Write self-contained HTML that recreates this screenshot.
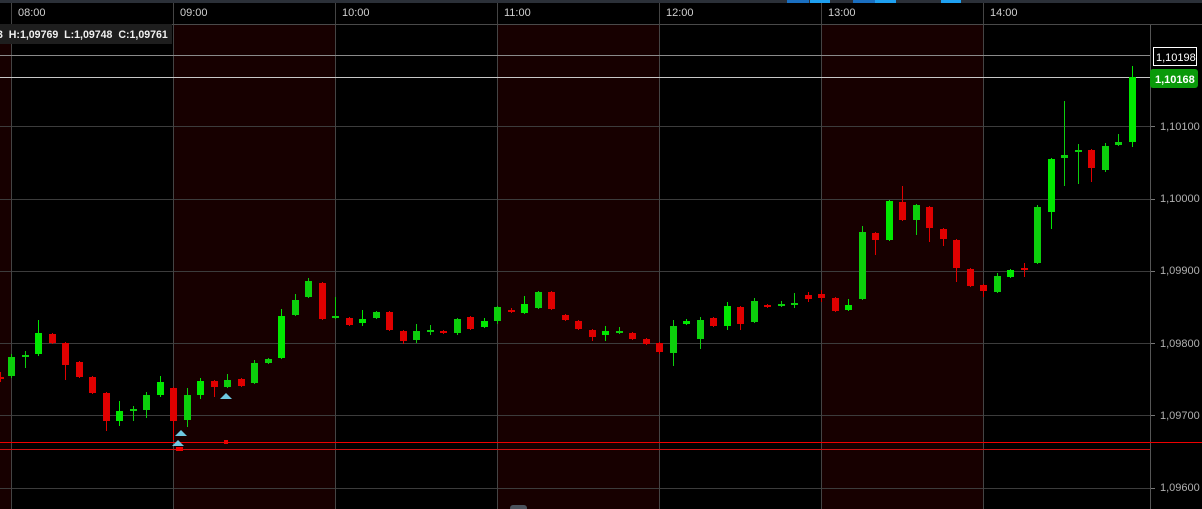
<!DOCTYPE html>
<html><head><meta charset="utf-8"><style>
html,body{margin:0;padding:0;background:#000;width:1202px;height:509px;overflow:hidden;font-family:"Liberation Sans",sans-serif}
svg{display:block}
</style></head><body>
<svg id="s" width="1202" height="509" xmlns="http://www.w3.org/2000/svg">
<rect width="1202" height="509" fill="#000"/>
<rect x="0" y="0" width="1202" height="3" fill="#2b3038"/>
<rect x="787" y="0" width="22" height="3" fill="#1a6fc0"/>
<rect x="810" y="0" width="20" height="3" fill="#1ea0f0"/>
<rect x="853" y="0" width="22" height="3" fill="#1a6fc0"/>
<rect x="875" y="0" width="21" height="3" fill="#1ea0f0"/>
<rect x="941" y="0" width="20" height="3" fill="#1ea0f0"/>
<g fill="#170000">
<rect x="0" y="25" width="11" height="484"/>
<rect x="173" y="25" width="162" height="484"/>
<rect x="497" y="25" width="162" height="484"/>
<rect x="821" y="25" width="162" height="484"/>
</g>
<g stroke="#3c3c3c" stroke-width="1">
<line x1="0" y1="126.5" x2="1150" y2="126.5"/>
<line x1="0" y1="199.5" x2="1150" y2="199.5"/>
<line x1="0" y1="271.5" x2="1150" y2="271.5"/>
<line x1="0" y1="343.5" x2="1150" y2="343.5"/>
<line x1="0" y1="415.5" x2="1150" y2="415.5"/>
<line x1="0" y1="488.5" x2="1150" y2="488.5"/>
</g>
<g stroke="#444" stroke-width="1">
<line x1="11.5" y1="3" x2="11.5" y2="509"/>
<line x1="173.5" y1="3" x2="173.5" y2="509"/>
<line x1="335.5" y1="3" x2="335.5" y2="509"/>
<line x1="497.5" y1="3" x2="497.5" y2="509"/>
<line x1="659.5" y1="3" x2="659.5" y2="509"/>
<line x1="821.5" y1="3" x2="821.5" y2="509"/>
<line x1="983.5" y1="3" x2="983.5" y2="509"/>
</g>
<line x1="0" y1="24.5" x2="1202" y2="24.5" stroke="#4a4a4a"/>
<line x1="1150.5" y1="25" x2="1150.5" y2="509" stroke="#555"/>
<line x1="0" y1="55.5" x2="1150" y2="55.5" stroke="#8a8a8a"/>
<line x1="0" y1="77.5" x2="1150" y2="77.5" stroke="#c8c8c8"/>
<g fill="#cfcfcf" font-size="11">
<text x="18" y="16">08:00</text><text x="180" y="16">09:00</text><text x="342" y="16">10:00</text>
<text x="504" y="16">11:00</text><text x="666" y="16">12:00</text><text x="828" y="16">13:00</text><text x="990" y="16">14:00</text>
</g>
<g id="c"></g>
<line x1="0" y1="442.5" x2="1202" y2="442.5" stroke="#ee0000"/>
<line x1="0" y1="449.5" x2="1150" y2="449.5" stroke="#cc1010"/>
<rect x="176" y="447" width="7" height="4" fill="#ee0000"/>
<rect x="224" y="440" width="4" height="4" fill="#ee0000"/>
<g fill="#6ec8e0">
<path d="M172 446 L178 440 L184 446Z"/><path d="M175 436 L181 430 L187 436Z"/><path d="M220 399 L226 393 L232 399Z"/>
</g>
<g fill="#b0b0b0" font-size="11">
<text x="1160" y="130">1,10100</text><text x="1160" y="202">1,10000</text><text x="1160" y="274">1,09900</text>
<text x="1160" y="347">1,09800</text><text x="1160" y="419">1,09700</text><text x="1160" y="491">1,09600</text>
</g>
<g stroke="#777"><line x1="1151" y1="126.5" x2="1155" y2="126.5"/><line x1="1151" y1="199.5" x2="1155" y2="199.5"/><line x1="1151" y1="271.5" x2="1155" y2="271.5"/><line x1="1151" y1="343.5" x2="1155" y2="343.5"/><line x1="1151" y1="415.5" x2="1155" y2="415.5"/><line x1="1151" y1="488.5" x2="1155" y2="488.5"/></g>
<rect x="1153.5" y="47.5" width="43" height="18" fill="#000" stroke="#fff"/>
<text x="1156" y="61" fill="#fff" font-size="11">1,10198</text>
<rect x="1150" y="69" width="48" height="19" rx="3" fill="#0a9a0a"/>
<text x="1155" y="83" fill="#fff" font-size="11" font-weight="bold">1,10168</text>
<rect x="0" y="24" width="172" height="20" fill="#1e1e1e"/>
<text x="-3" y="38" fill="#f0f0f0" font-size="10.6" font-weight="bold" xml:space="preserve">3  H:1,09769  L:1,09748  C:1,09761</text>
<rect x="510" y="505" width="17" height="6" rx="3" fill="#4a525c"/>
</svg>
<script>
var d=[[0,377,379,372,382],[11,376,357,354,378],[25,357,355,351,368],[38,354,333,320,356],[52,334,343,333,344],[65,343,365,342,380],[79,362,377,361,378],[92,377,393,376,394],[106,393,421,392,431],[119,421,411,401,426],[133,411,409,406,421],[146,410,395,392,418],[160,395,382,376,397],[173,388,421,387,440],[187,420,395,388,427],[200,395,381,378,399],[214,381,387,380,397],[227,387,380,374,388],[241,379,386,378,387],[254,383,363,360,384],[268,363,359,358,364],[281,358,316,309,359],[295,315,300,294,316],[308,297,281,278,298],[322,283,319,282,320],[335,318,316,297,319],[349,318,325,317,326],[362,323,319,310,326],[376,318,312,311,319],[389,312,330,311,331],[403,331,341,330,344],[416,340,331,324,343],[430,332,330,325,335],[443,331,333,330,334],[457,333,319,318,335],[470,317,329,316,330],[484,327,321,318,328],[497,321,307,306,324],[511,310,312,308,313],[524,313,304,296,314],[538,308,292,291,309],[551,292,309,291,310],[565,315,320,314,321],[578,321,329,320,330],[592,330,337,329,341],[605,335,331,326,341],[619,333,331,327,334],[632,333,339,332,340],[646,339,344,338,345],[659,343,352,342,354],[673,353,326,320,366],[686,324,321,319,325],[700,339,320,317,349],[713,318,326,317,327],[727,326,306,302,330],[740,307,324,306,330],[754,322,301,298,323],[767,305,307,304,308],[781,306,304,301,307],[794,305,303,293,308],[808,295,299,292,302],[821,294,298,290,302],[835,298,311,297,312],[848,310,305,299,311],[862,299,232,226,300],[875,233,240,232,255],[889,240,201,200,241],[902,202,220,186,221],[916,220,205,204,235],[929,207,228,206,242],[943,229,239,228,246],[956,240,268,239,282],[970,269,286,268,287],[983,285,291,284,297],[997,292,276,273,293],[1010,277,270,269,278],[1024,268,270,263,277],[1037,263,207,205,264],[1051,212,159,158,229],[1064,158,155,101,186],[1078,152,150,144,184],[1091,150,168,149,182],[1105,170,146,143,172],[1118,145,142,134,146],[1132,142,77,66,147]];
var g=document.getElementById('c'),h='';
d.forEach(function(c,i){var x=c[0],up=c[2]<c[1],col=up?(i%3?'#0ccf0c':'#00e800'):'#e00000';
var t=Math.min(c[1],c[2]),b=Math.max(c[1],c[2]);if(b-t<2){b=t+3;t-=1}
h+='<line x1="'+(x+0.5)+'" y1="'+c[3]+'" x2="'+(x+0.5)+'" y2="'+c[4]+'" stroke="'+col+'"/>';
h+='<rect x="'+(x-3)+'" y="'+t+'" width="7" height="'+(b-t)+'" fill="'+col+'"/>';});
g.innerHTML=h;
</script>
</body></html>
